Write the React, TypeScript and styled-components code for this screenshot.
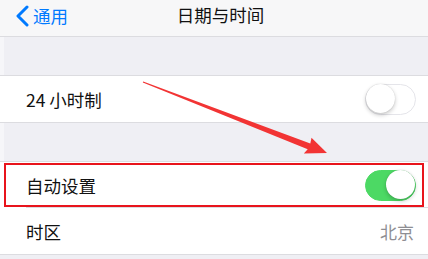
import styled, { createGlobalStyle } from "styled-components";

const GlobalStyle = createGlobalStyle`
  body {
    margin: 0;
    background: #efeff4;
    font-family: "Noto Sans CJK SC", "Noto Sans", sans-serif;
    -webkit-font-smoothing: antialiased;
  }
`;

const Screen = styled.div`
  position: relative;
  width: 428px;
  height: 259px;
  overflow: hidden;
  background: #efeff4;
`;

const NavBar = styled.header`
  height: 37px;
  background: #f7f7f8;
  border-bottom: 1px solid #dcdce0;
  display: grid;
  grid-template-columns: 1fr auto 1fr;
  align-items: start;
  padding-top: 4px;
  box-sizing: border-box;
`;

const BackButton = styled.div`
  display: flex;
  align-items: center;
  gap: 4px;
  padding-left: 15px;
  color: #007aff;
  font-size: 17.5px;
  line-height: 22px;
  svg {
    margin-top: 1px;
  }
`;

const NavTitle = styled.div`
  font-size: 17.5px;
  line-height: 22px;
  color: #111;
  margin-left: 13px;
`;

const Spacer = styled.div`
  height: 38px;
  box-shadow: inset 4px 0 0 #f6f6f9;
`;

const Group = styled.section`
  background: #fff;
  border-top: 1px solid #dcdce0;
  border-bottom: 1px solid #dcdce0;
`;

const Row = styled.div<{ $highlight?: boolean; $divider?: boolean }>`
  position: relative;
  height: 46px;
  display: flex;
  align-items: center;
  justify-content: space-between;
  padding: 0 12px 0 26px;
  font-size: 17.5px;
  color: #111;
  &::before {
    content: "";
    display: ${(p) => (p.$divider ? "block" : "none")};
    position: absolute;
    left: 26px;
    right: 0;
    bottom: 0;
    height: 1px;
    background: #dcdce0;
  }
  &::after {
    content: "";
    display: ${(p) => (p.$highlight ? "block" : "none")};
    position: absolute;
    top: 1px;
    bottom: 1px;
    left: 4px;
    right: 4px;
    border: 2px solid #e8141c;
  }
`;

const Detail = styled.span`
  color: #8e8e93;
  font-size: 17px;
  margin-right: 2px;
`;

const Switch = styled.div<{ $on?: boolean }>`
  position: relative;
  width: 51px;
  height: 31px;
  border-radius: 16px;
  box-sizing: border-box;
  background: ${(p) => (p.$on ? "#4cd964" : "#fff")};
  border: 1.5px solid ${(p) => (p.$on ? "#4cd964" : "#e5e5ea")};
  &::after {
    content: "";
    position: absolute;
    top: -0.5px;
    left: ${(p) => (p.$on ? "20px" : "-0.5px")};
    width: 29px;
    height: 29px;
    border-radius: 50%;
    background: #fff;
    box-shadow: 0 2px 4px rgba(0, 0, 0, 0.22), 0 0 1px rgba(0, 0, 0, 0.2);
  }
`;

const Annotation = styled.svg`
  position: absolute;
  left: 0;
  top: 0;
  pointer-events: none;
`;

export default function App() {
  return (
    <Screen>
      <GlobalStyle />
      <NavBar>
        <BackButton>
          <svg width="14" height="22" viewBox="0 0 14 22">
            <polyline
              points="12,2 3,11 12,20"
              fill="none"
              stroke="#007aff"
              strokeWidth="3"
              strokeLinecap="round"
              strokeLinejoin="round"
            />
          </svg>
          通用
        </BackButton>
        <NavTitle>日期与时间</NavTitle>
        <div />
      </NavBar>
      <Spacer />
      <Group>
        <Row>
          24 小时制
          <Switch />
        </Row>
      </Group>
      <Spacer />
      <Group>
        <Row $highlight $divider>
          自动设置
          <Switch $on />
        </Row>
        <Row>
          时区
          <Detail>北京</Detail>
        </Row>
      </Group>
      <Annotation width="428" height="259" viewBox="0 0 428 259">
        <polygon
          points="142.8,82.6 143.2,81.4 310.3,143.6 311.5,137.8 327,153 303.8,153.6 307.7,149.3"
          fill="#f23434"
        />
      </Annotation>
    </Screen>
  );
}
